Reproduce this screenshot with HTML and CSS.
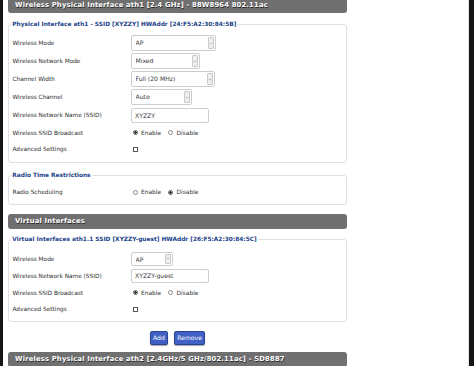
FILE: index.html
```html
<!DOCTYPE html>
<html lang="en">
<head>
<meta charset="utf-8">
<title>Wireless</title>
<link rel="stylesheet" href="styles.css">
</head>
<body>
<div class="page">
  <div class="content">
    <h2 class="bar bar-first">Wireless Physical Interface ath1 [2.4 GHz] - 88W8964 802.11ac</h2>

    <fieldset class="group">
      <legend>Physical Interface ath1 - SSID [XYZZY] HWAddr [24:F5:A2:30:84:5B]</legend>
      <div class="row">
        <span class="label">Wireless Mode</span>
        <span class="sel sel-85"><select><option>AP</option></select><span class="arrow"><svg viewBox="0 0 6 4"><path d="M1.2 1 L3 2.8 L4.8 1" fill="none" stroke="#8a8a8a" stroke-width="0.8"/></svg></span></span>
      </div>
      <div class="row">
        <span class="label">Wireless Network Mode</span>
        <span class="sel sel-69"><select><option>Mixed</option></select><span class="arrow"><svg viewBox="0 0 6 4"><path d="M1.2 1 L3 2.8 L4.8 1" fill="none" stroke="#8a8a8a" stroke-width="0.8"/></svg></span></span>
      </div>
      <div class="row">
        <span class="label">Channel Width</span>
        <span class="sel sel-84"><select><option>Full (20 MHz)</option></select><span class="arrow"><svg viewBox="0 0 6 4"><path d="M1.2 1 L3 2.8 L4.8 1" fill="none" stroke="#8a8a8a" stroke-width="0.8"/></svg></span></span>
      </div>
      <div class="row">
        <span class="label">Wireless Channel</span>
        <span class="sel sel-61"><select><option>Auto</option></select><span class="arrow"><svg viewBox="0 0 6 4"><path d="M1.2 1 L3 2.8 L4.8 1" fill="none" stroke="#8a8a8a" stroke-width="0.8"/></svg></span></span>
      </div>
      <div class="row">
        <span class="label">Wireless Network Name (SSID)</span>
        <input class="txt" type="text" value="XYZZY">
      </div>
      <div class="row row-radio">
        <span class="label">Wireless SSID Broadcast</span>
        <span class="radios">
          <label class="opt"><input type="radio" name="b1" checked><span>Enable</span></label>
          <label class="opt"><input type="radio" name="b1"><span>Disable</span></label>
        </span>
      </div>
      <div class="row row-check">
        <span class="label">Advanced Settings</span>
        <input class="chk" type="checkbox">
      </div>
    </fieldset>

    <fieldset class="group group-compact">
      <legend>Radio Time Restrictions</legend>
      <div class="row row-radio">
        <span class="label">Radio Scheduling</span>
        <span class="radios">
          <label class="opt"><input type="radio" name="rs"><span>Enable</span></label>
          <label class="opt"><input type="radio" name="rs" checked><span>Disable</span></label>
        </span>
      </div>
    </fieldset>

    <h2 class="bar bar-mid">Virtual Interfaces</h2>

    <fieldset class="group group-tight">
      <legend>Virtual Interfaces ath1.1 SSID [XYZZY-guest] HWAddr [26:F5:A2:30:84:5C]</legend>
      <div class="row">
        <span class="label">Wireless Mode</span>
        <span class="sel sel-42"><select><option>AP</option></select><span class="arrow"><svg viewBox="0 0 6 4"><path d="M1.2 1 L3 2.8 L4.8 1" fill="none" stroke="#8a8a8a" stroke-width="0.8"/></svg></span></span>
      </div>
      <div class="row">
        <span class="label">Wireless Network Name (SSID)</span>
        <input class="txt txt-small" type="text" value="XYZZY-guest">
      </div>
      <div class="row row-radio">
        <span class="label">Wireless SSID Broadcast</span>
        <span class="radios">
          <label class="opt"><input type="radio" name="b2" checked><span>Enable</span></label>
          <label class="opt"><input type="radio" name="b2"><span>Disable</span></label>
        </span>
      </div>
      <div class="row row-check">
        <span class="label">Advanced Settings</span>
        <input class="chk" type="checkbox">
      </div>
    </fieldset>

    <div class="actions">
      <button class="btn" type="button">Add</button>
      <button class="btn" type="button">Remove</button>
    </div>

    <h2 class="bar bar-last">Wireless Physical Interface ath2 [2.4GHz/5 GHz/802.11ac] - SD8887</h2>
  </div>
</div>
</body>
</html>
```

FILE: styles.css
```css
html, body {
  margin: 0;
  padding: 0;
}

body {
  background: #161616;
  font-family: "DejaVu Sans", Verdana, sans-serif;
  color: #333;
  overflow: hidden;
}

.page {
  margin-left: 3px;
  width: 466px;
  height: 366px;
  box-sizing: border-box;
  background: #fff;
  border-right: 1px solid #e4e4e4;
  padding-left: 5px;
  overflow: hidden;
}

.content {
  width: 339px;
}

.bar {
  margin: 0;
  height: 15px;
  line-height: 15px;
  background: #707070;
  border-radius: 3px;
  color: #fff;
  font-family: "DejaVu Sans", Verdana, sans-serif;
  font-weight: bold;
  font-size: 6.8px;
  letter-spacing: 0.17px;
  padding-left: 7px;
  text-shadow: 0.5px 0.5px 0.6px #2a2a2a;
  white-space: nowrap;
}

.bar-first {
  margin-top: -2px;
  border-top-left-radius: 0;
  border-top-right-radius: 0;
}

.bar-mid {
  margin-top: 9px;
}

.bar-last {
  margin-top: 7px;
}

.group {
  margin: 8px 0 0;
  border: 1px solid #e0e0e0;
  border-radius: 3px;
  padding: 6px 4px 5px 3.5px;
  min-width: 0;
}

.group legend {
  padding: 0 1px;
  margin-left: -1.2px;
  font-weight: bold;
  font-size: 5.85px;
  line-height: 7px;
  color: #223f8a;
  white-space: nowrap;
}

.group-compact {
  margin-top: 8.5px;
  padding-top: 5px;
  padding-bottom: 3.5px;
}

.group-tight {
  margin-top: 7px;
  padding-top: 7px;
  padding-bottom: 4px;
}

.row {
  display: flex;
  align-items: center;
  height: 18px;
}

.row-radio {
  height: 17px;
}

.row-check {
  height: 16px;
}

.group-tight .row {
  height: 17px;
}

.group-tight .row-check {
  height: 16px;
}

.label {
  flex: none;
  width: 118.5px;
  font-size: 5.8px;
  color: #2e2e2e;
  white-space: nowrap;
}

.sel {
  display: flex;
  align-items: stretch;
  box-sizing: border-box;
  height: 16px;
  border: 1px solid #cdcdcd;
  border-radius: 2px;
  background: #fff;
  padding: 1px;
}

.group-tight .sel {
  height: 14px;
}

.sel select {
  -webkit-appearance: none;
  appearance: none;
  flex: 1;
  min-width: 0;
  display: block;
  box-sizing: border-box;
  height: 100%;
  margin: 0;
  border: 0;
  background: transparent;
  padding: 0 0 0 2.5px;
  font-family: "DejaVu Sans", Verdana, sans-serif;
  font-size: 6.1px;
  line-height: 12px;
  color: #3a3a3a;
  outline: none;
}

.sel .arrow {
  flex: none;
  width: 4px;
  background: #eeeeee;
  border: 1px solid #c9c9c9;
  border-radius: 1px;
  display: flex;
  align-items: center;
  justify-content: center;
}

.sel .arrow svg {
  width: 4px;
  height: 3px;
}

.sel-85 { width: 85px; }
.sel-69 { width: 69px; }
.sel-84 { width: 84px; }
.sel-61 { width: 61px; }
.sel-42 { width: 42px; }

.txt {
  box-sizing: border-box;
  width: 78px;
  height: 15px;
  margin: 0;
  border: 1px solid #cfcfcf;
  border-radius: 2px;
  padding: 0 3px;
  font-family: "DejaVu Sans", Verdana, sans-serif;
  font-size: 6.1px;
  color: #3a3a3a;
  outline: none;
}

.txt-small {
  height: 14px;
}

.radios {
  display: flex;
  align-items: center;
  padding-left: 1.5px;
  gap: 7px;
}

.opt {
  display: flex;
  align-items: center;
  gap: 3.5px;
  font-size: 5.9px;
  color: #333;
  white-space: nowrap;
}

.opt input {
  -webkit-appearance: none;
  appearance: none;
  box-sizing: border-box;
  width: 5px;
  height: 5px;
  margin: 0;
  border: 0.8px solid #8a8a8a;
  border-radius: 50%;
  background: #fff;
}

.opt input:checked {
  border-color: #555;
  background: radial-gradient(circle, #222 0, #222 45%, #fff 60%);
}

.chk {
  -webkit-appearance: none;
  appearance: none;
  box-sizing: border-box;
  width: 5px;
  height: 5px;
  margin: 0 0 0 1.5px;
  border: 0.8px solid #555;
  border-radius: 0.5px;
  background: #fff;
}

.actions {
  display: flex;
  justify-content: center;
  gap: 6px;
  margin-top: 9px;
}

.btn {
  height: 14px;
  margin: 0;
  padding: 0 2.2px;
  border: 1px solid #2a4594;
  border-radius: 2px;
  background: #4061c3;
  color: #fff;
  font-family: "DejaVu Sans", Verdana, sans-serif;
  font-size: 6.1px;
  line-height: 12px;
  box-shadow: 0 1px 1px rgba(0, 0, 0, 0.35);
}
```
